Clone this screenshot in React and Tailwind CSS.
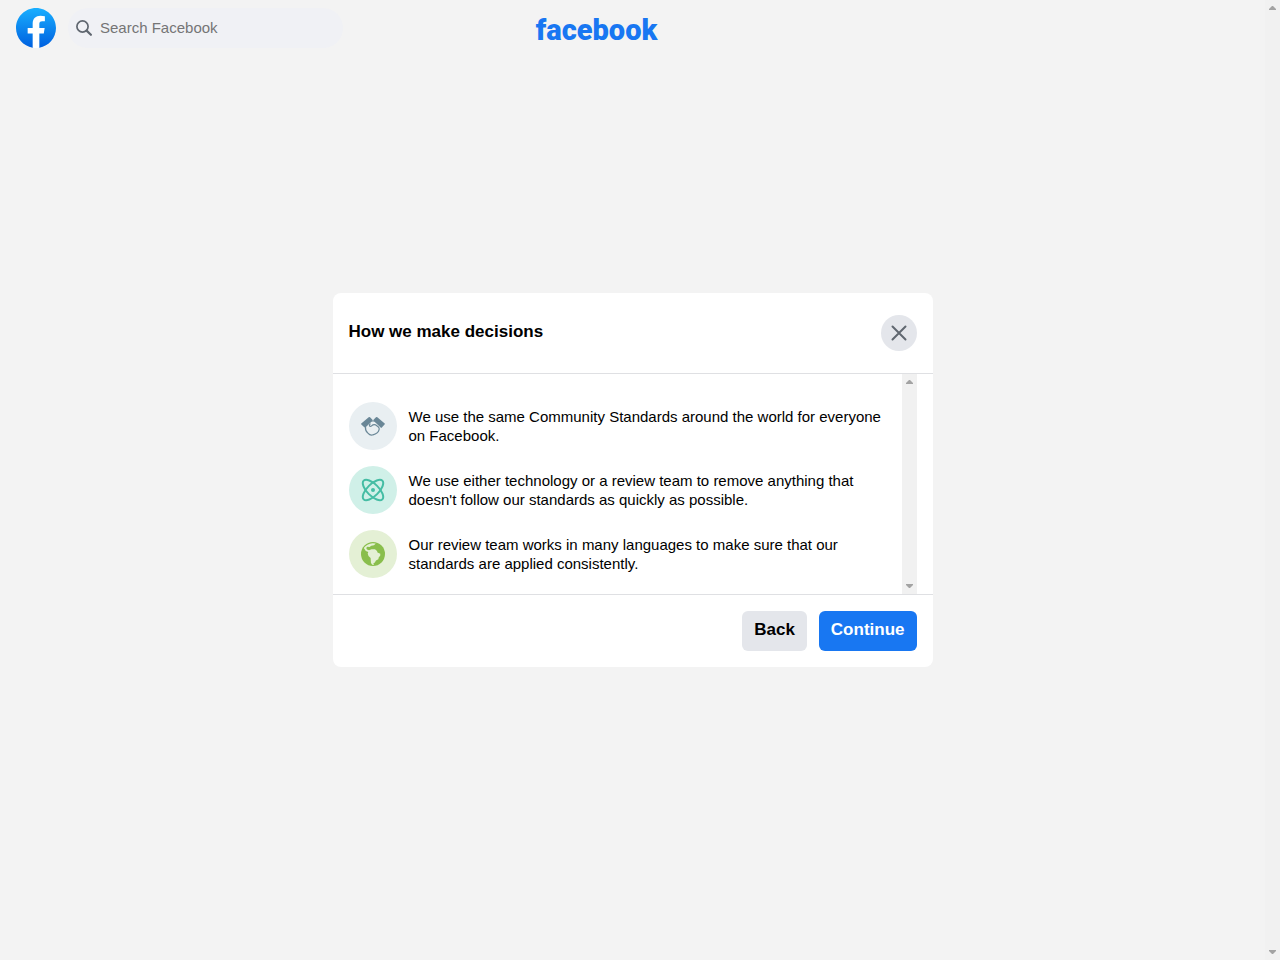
import React from "react";

function FacebookMark() {
  return (
    <svg viewBox="0 0 36 36" className="size-10" fill="url(#mark-blue)" aria-hidden="true">
      <defs>
        <linearGradient id="mark-blue" x1="50%" x2="50%" y1="97%" y2="0%">
          <stop offset="0%" stopColor="#0062E0" />
          <stop offset="100%" stopColor="#19AFFF" />
        </linearGradient>
      </defs>
      <path d="M15 35.8C6.5 34.3 0 26.9 0 18 0 8.1 8.1 0 18 0s18 8.1 18 18c0 8.9-6.5 16.3-15 17.8l-1-.8h-4l-1 .8z" />
      <path
        fill="#fff"
        d="M25 23l.8-5H21v-3.5c0-1.4.5-2.5 2.7-2.5H26V7.4c-1.3-.2-2.7-.4-4-.4-4.100 0-7 2.500-7 7v4h-4.500v5H15v12.700c1 .2 2 .3 3 .3s2-.1 3-.3V23h4z"
      />
    </svg>
  );
}

function SearchIcon() {
  return (
    <svg viewBox="0 0 16 16" className="size-4 shrink-0" fill="none" stroke="#606770" aria-hidden="true">
      <circle cx="6.500" cy="6.500" r="5.600" strokeWidth="1.700" />
      <path d="M10.600 10.600l4.300 4.200" strokeWidth="2.200" strokeLinecap="round" />
    </svg>
  );
}

function HandshakeIcon() {
  return (
    <svg viewBox="0 0 24 24" className="size-6" fill="none" stroke="#6a8797" strokeLinejoin="round" strokeLinecap="round" aria-hidden="true">
      <g fill="#6a8797" strokeWidth="2">
        <path d="M8.300 4L10.500 6.300L4 12.400L1.200 9.900z" />
        <path d="M15.700 4L13.500 6.300L20.300 12.700L22.800 9.900z" />
      </g>
      <path
        d="M10.500 7h3M4.500 13c-.3 2.600.5 4.600 2.400 6.100 1.400 1.600 3.300 2.400 5 1.700 3.100-.7 5.600-2.600 6.200-5.200.3-1.200 0-2-.7-2.600l-2.900-2.200c-1.700-.3-3 .1-3.900 1-.7.7-1.800.7-2.100 0-.2-.7.1-1.300.6-1.900"
        strokeWidth="1.200"
      />
    </svg>
  );
}

function AtomIcon() {
  return (
    <svg viewBox="0 0 24 24" className="size-6" fill="none" stroke="#45bda4" strokeWidth="2" aria-hidden="true">
      <ellipse cx="12" cy="12" rx="13.200" ry="5.800" transform="rotate(45 12 12)" />
      <ellipse cx="12" cy="12" rx="13.200" ry="5.800" transform="rotate(-45 12 12)" />
      <circle cx="12" cy="12" r="2" fill="#45bda4" stroke="none" />
    </svg>
  );
}

function GlobeIcon() {
  return (
    <svg viewBox="0 0 24 24" className="size-6" aria-hidden="true">
      <circle cx="12" cy="12" r="12" fill="#89be4c" />
      <path
        fill="#e4f0d5"
        d="M2.800 6C4.600 3.200 8 1.300 11.500 1.200L14.800 1.600L13 3.200L10.300 3.700L8.600 4.900L6.300 4.800L5.200 6L6 7.500L8 8.200L10.500 7.200L14 7.300L16 9L16.500 10.600L19.300 11.800L19.200 13.800L17.800 15.300L17.300 17.200L15 18.500L13.800 20.600L12.300 21.600L13 23L11.200 22.800L10 21L9.600 16L7.500 14L6.700 11.600L7.300 9.900L4.800 8.900z"
      />
    </svg>
  );
}

function CloseIcon() {
  return (
    <svg viewBox="0 0 20 20" className="size-5" fill="none" stroke="#606770" strokeWidth="2" strokeLinecap="round" aria-hidden="true">
      <path d="M3.500 3.500l13 13M16.500 3.500l-13 13" />
    </svg>
  );
}

function ScrollTrack() {
  return (
    <div className="flex w-[15px] shrink-0 flex-col items-center justify-between bg-[#f1f1f1] py-1.5" aria-hidden="true">
      <svg viewBox="0 0 7 4" className="h-1 w-[7px]" fill="#a3a3a3">
        <path d="M3 0h1l3 3v1H0V3z" />
      </svg>
      <svg viewBox="0 0 7 4" className="h-1 w-[7px]" fill="#a3a3a3">
        <path d="M3 4h1l3-3V0H0v1z" />
      </svg>
    </div>
  );
}

const points = [
  {
    icon: <HandshakeIcon />,
    tint: "bg-[#e9eff2]",
    text: "We use the same Community Standards around the world for everyone on Facebook.",
  },
  {
    icon: <AtomIcon />,
    tint: "bg-[#d0f0e8]",
    text: "We use either technology or a review team to remove anything that doesn't follow our standards as quickly as possible.",
  },
  {
    icon: <GlobeIcon />,
    tint: "bg-[#e4f0d5]",
    text: "Our review team works in many languages to make sure that our standards are applied consistently.",
  },
];

function Header() {
  return (
    <header className="grid h-14 shrink-0 grid-cols-[1fr_auto_1fr] items-center pl-4">
      <div className="flex items-center gap-3">
        <a href="/" aria-label="Facebook home">
          <FacebookMark />
        </a>
        <label className="flex h-10 w-[275px] items-center gap-2 rounded-full bg-[#f0f1f5] pr-4 pl-2">
          <SearchIcon />
          <input
            type="search"
            placeholder="Search Facebook"
            aria-label="Search Facebook"
            className="w-full bg-transparent text-[15px] outline-none placeholder:text-[#757575]"
          />
        </label>
      </div>
      <a href="/" className="mr-22 pt-1 font-[Roboto,sans-serif] text-[29px] leading-10 font-black text-[#1877f2]">
        facebook
      </a>
    </header>
  );
}

function Dialog() {
  return (
    <section role="dialog" aria-labelledby="dialog-title" className="w-full max-w-[600px] rounded-lg bg-white">
      <div className="flex h-20 items-center justify-between px-4">
        <h1 id="dialog-title" className="pb-0.5 text-[17px] leading-5 font-bold">
          How we make decisions
        </h1>
        <button type="button" aria-label="Close" className="grid size-9 place-items-center rounded-full bg-[#e4e6eb]">
          <CloseIcon />
        </button>
      </div>
      <div className="flex border-y border-[#dfe0e3] pr-4">
        <ul className="flex grow flex-col gap-4 px-4 pt-7 pb-4">
          {points.map((point) => (
            <li key={point.text} className="flex items-center gap-3">
              <span className={`grid size-12 shrink-0 place-items-center rounded-full ${point.tint}`}>{point.icon}</span>
              <p className="text-[15px] leading-[19px]">{point.text}</p>
            </li>
          ))}
        </ul>
        <ScrollTrack />
      </div>
      <div className="flex justify-end gap-3 p-4">
        <button type="button" className="h-10 rounded-md bg-[#e4e6eb] px-3 pb-0.5 text-[17px] font-bold">
          Back
        </button>
        <button type="button" className="h-10 rounded-md bg-[#1877f2] px-3 pb-0.5 text-[17px] font-bold text-white">
          Continue
        </button>
      </div>
    </section>
  );
}

export default function App() {
  return (
    <div className="flex min-h-screen bg-[#f3f3f3] font-['Liberation_Sans',Arial,sans-serif] text-black">
      <div className="flex grow flex-col">
        <Header />
        <main className="flex grow items-center justify-center pb-14">
          <Dialog />
        </main>
      </div>
      <ScrollTrack />
    </div>
  );
}
